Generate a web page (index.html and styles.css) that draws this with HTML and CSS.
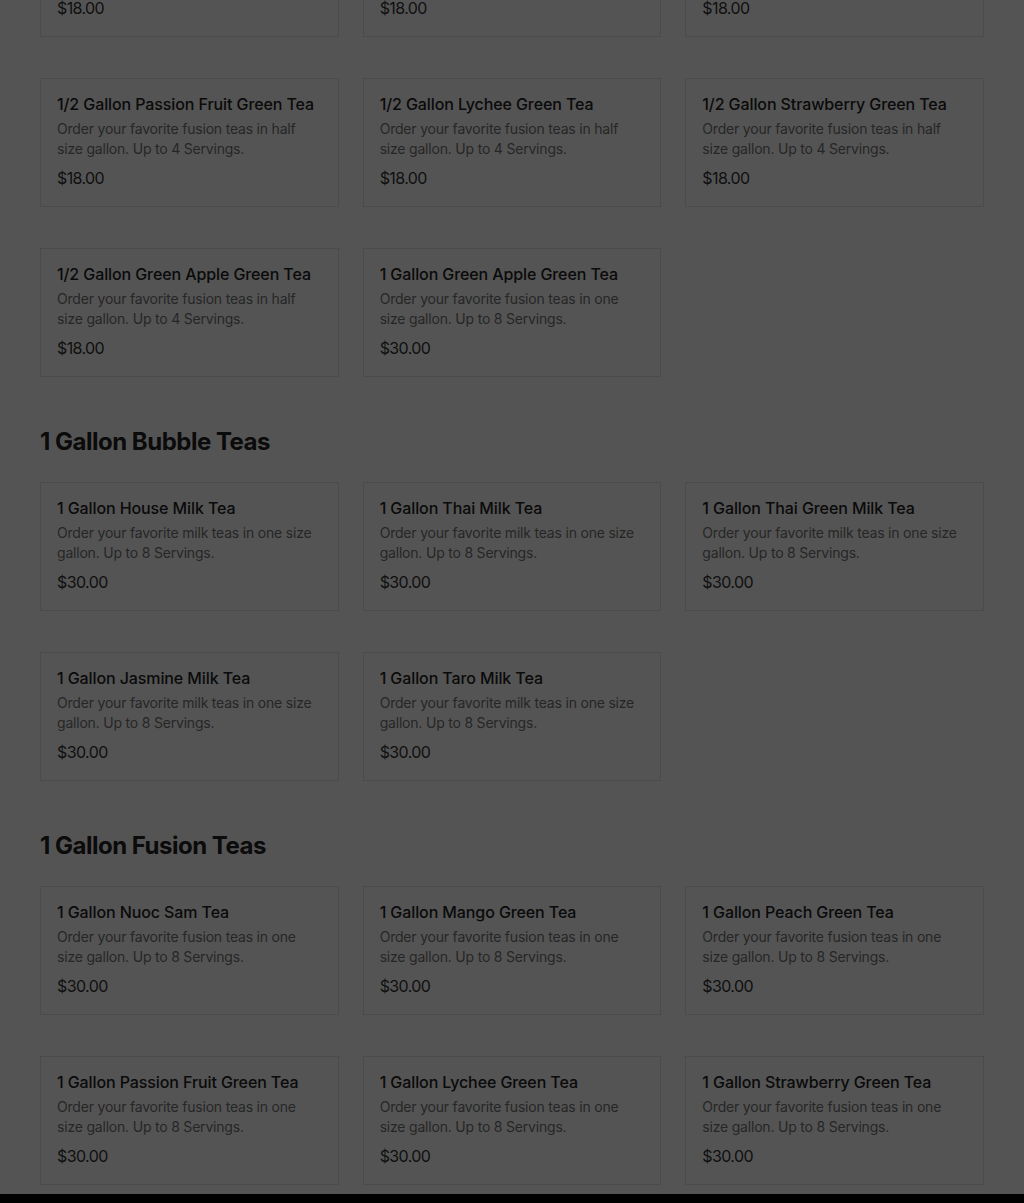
FILE: index.html
```html
<!DOCTYPE html>
<html lang="en">
<head>
    <meta charset="UTF-8">
    <meta name="viewport" content="width=device-width, initial-scale=1.0">
    <title>Menu - Gallon Teas</title>
    <link rel="stylesheet" href="styles.css">
</head>
<body>
    <div class="page">
        <!-- Menu -->
        <main class="menu">
            <!-- 1/2 Gallon Fusion Teas (scrolled past the heading) -->
            <section class="menu-section first">
                <ul class="item-grid">
                    <li class="item-card">
                        <h3>1/2 Gallon Nuoc Sam Tea</h3>
                        <p class="desc">Order your favorite fusion teas in half size gallon. Up to 4 Servings.</p>
                        <p class="price">$18.00</p>
                    </li>
                    <li class="item-card">
                        <h3>1/2 Gallon Mango Green Tea</h3>
                        <p class="desc">Order your favorite fusion teas in half size gallon. Up to 4 Servings.</p>
                        <p class="price">$18.00</p>
                    </li>
                    <li class="item-card">
                        <h3>1/2 Gallon Peach Green Tea</h3>
                        <p class="desc">Order your favorite fusion teas in half size gallon. Up to 4 Servings.</p>
                        <p class="price">$18.00</p>
                    </li>
                    <li class="item-card">
                        <h3>1/2 Gallon Passion Fruit Green Tea</h3>
                        <p class="desc">Order your favorite fusion teas in half size gallon. Up to 4 Servings.</p>
                        <p class="price">$18.00</p>
                    </li>
                    <li class="item-card">
                        <h3>1/2 Gallon Lychee Green Tea</h3>
                        <p class="desc">Order your favorite fusion teas in half size gallon. Up to 4 Servings.</p>
                        <p class="price">$18.00</p>
                    </li>
                    <li class="item-card">
                        <h3>1/2 Gallon Strawberry Green Tea</h3>
                        <p class="desc">Order your favorite fusion teas in half size gallon. Up to 4 Servings.</p>
                        <p class="price">$18.00</p>
                    </li>
                    <li class="item-card">
                        <h3>1/2 Gallon Green Apple Green Tea</h3>
                        <p class="desc">Order your favorite fusion teas in half size gallon. Up to 4 Servings.</p>
                        <p class="price">$18.00</p>
                    </li>
                    <li class="item-card">
                        <h3>1 Gallon Green Apple Green Tea</h3>
                        <p class="desc">Order your favorite fusion teas in one size gallon. Up to 8 Servings.</p>
                        <p class="price">$30.00</p>
                    </li>
                </ul>
            </section>

            <!-- 1 Gallon Bubble Teas -->
            <section class="menu-section">
                <h2>1 Gallon Bubble Teas</h2>
                <ul class="item-grid">
                    <li class="item-card">
                        <h3>1 Gallon House Milk Tea</h3>
                        <p class="desc">Order your favorite milk teas in one size gallon. Up to 8 Servings.</p>
                        <p class="price">$30.00</p>
                    </li>
                    <li class="item-card">
                        <h3>1 Gallon Thai Milk Tea</h3>
                        <p class="desc">Order your favorite milk teas in one size gallon. Up to 8 Servings.</p>
                        <p class="price">$30.00</p>
                    </li>
                    <li class="item-card">
                        <h3>1 Gallon Thai Green Milk Tea</h3>
                        <p class="desc">Order your favorite milk teas in one size gallon. Up to 8 Servings.</p>
                        <p class="price">$30.00</p>
                    </li>
                    <li class="item-card">
                        <h3>1 Gallon Jasmine Milk Tea</h3>
                        <p class="desc">Order your favorite milk teas in one size gallon. Up to 8 Servings.</p>
                        <p class="price">$30.00</p>
                    </li>
                    <li class="item-card">
                        <h3>1 Gallon Taro Milk Tea</h3>
                        <p class="desc">Order your favorite milk teas in one size gallon. Up to 8 Servings.</p>
                        <p class="price">$30.00</p>
                    </li>
                </ul>
            </section>

            <!-- 1 Gallon Fusion Teas -->
            <section class="menu-section">
                <h2>1 Gallon Fusion Teas</h2>
                <ul class="item-grid">
                    <li class="item-card">
                        <h3>1 Gallon Nuoc Sam Tea</h3>
                        <p class="desc">Order your favorite fusion teas in one size gallon. Up to 8 Servings.</p>
                        <p class="price">$30.00</p>
                    </li>
                    <li class="item-card">
                        <h3>1 Gallon Mango Green Tea</h3>
                        <p class="desc">Order your favorite fusion teas in one size gallon. Up to 8 Servings.</p>
                        <p class="price">$30.00</p>
                    </li>
                    <li class="item-card">
                        <h3>1 Gallon Peach Green Tea</h3>
                        <p class="desc">Order your favorite fusion teas in one size gallon. Up to 8 Servings.</p>
                        <p class="price">$30.00</p>
                    </li>
                    <li class="item-card">
                        <h3>1 Gallon Passion Fruit Green Tea</h3>
                        <p class="desc">Order your favorite fusion teas in one size gallon. Up to 8 Servings.</p>
                        <p class="price">$30.00</p>
                    </li>
                    <li class="item-card">
                        <h3>1 Gallon Lychee Green Tea</h3>
                        <p class="desc">Order your favorite fusion teas in one size gallon. Up to 8 Servings.</p>
                        <p class="price">$30.00</p>
                    </li>
                    <li class="item-card">
                        <h3>1 Gallon Strawberry Green Tea</h3>
                        <p class="desc">Order your favorite fusion teas in one size gallon. Up to 8 Servings.</p>
                        <p class="price">$30.00</p>
                    </li>
                </ul>
            </section>
        </main>

        <!-- Footer -->
        <footer class="footer"></footer>
    </div>

    <!-- Overlay to dim the page behind the modal -->
    <div class="overlay"></div>
</body>
</html>
```

FILE: styles.css
```css
/* Reset some default styles */
* {
    margin: 0;
    padding: 0;
    box-sizing: border-box;
}

body {
    font-family: 'Inter', 'Liberation Sans', sans-serif;
    background-color: #fff;
    color: #000;
    overflow: hidden;
}

/* Menu */
.menu {
    padding: 0 40px 9px;
}

.menu-section {
    margin-top: 49px;
}

    .menu-section.first {
        margin-top: -92px; /* page is scrolled down */
    }

    .menu-section h2 {
        font-size: 24px;
        line-height: 32px;
        font-weight: 700;
        letter-spacing: -0.5px;
        color: #222;
        margin-bottom: 24px;
    }

.item-grid {
    list-style: none;
    display: grid;
    grid-template-columns: repeat(3, 1fr);
    column-gap: 24px;
    row-gap: 41px;
}

/* Item card */
.item-card {
    border: 1px solid #e2e2e2;
    padding: 15px 16px 16px;
    height: 129px;
}

    .item-card h3 {
        font-size: 16px;
        line-height: 20px;
        font-weight: 500;
        letter-spacing: -0.1px;
        color: #222;
    }

    .item-card .desc {
        margin-top: 5px;
        font-size: 14px;
        line-height: 20px;
        letter-spacing: -0.2px;
        color: #757575;
        padding-right: 6px;
    }

    .item-card .price {
        margin-top: 9px;
        font-size: 16px;
        line-height: 20px;
        letter-spacing: -0.6px;
        color: #333;
    }

/* Footer */
.footer {
    background-color: #000;
    height: 200px;
}

/* Overlay */
.overlay {
    position: fixed;
    top: 0;
    left: 0;
    width: 100%;
    height: 100%;
    background-color: rgba(0, 0, 0, 0.67);
    z-index: 5;
}
```
